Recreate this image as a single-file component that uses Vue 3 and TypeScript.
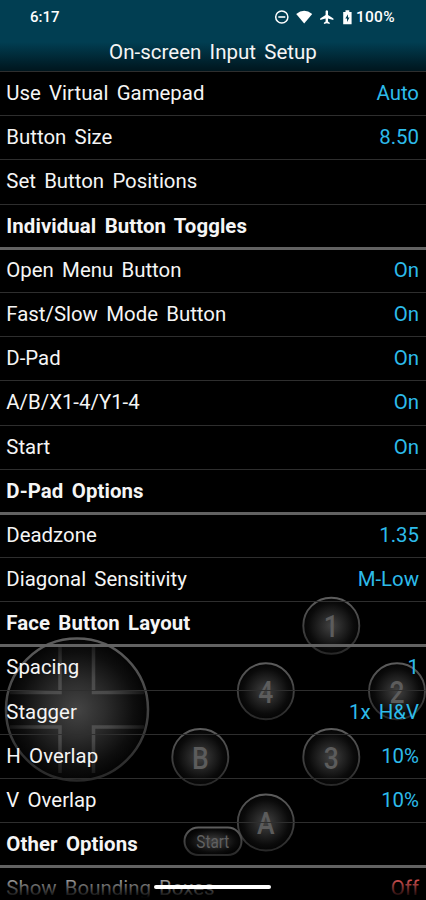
<script setup lang="ts">
interface Row {
  label: string
  value?: string
  kind?: 'heading' | 'off'
}

interface PadButton {
  label: string
  x: number
  y: number
}

const rows: Row[] = [
  { label: 'Use Virtual Gamepad', value: 'Auto' },
  { label: 'Button Size', value: '8.50' },
  { label: 'Set Button Positions' },
  { label: 'Individual Button Toggles', kind: 'heading' },
  { label: 'Open Menu Button', value: 'On' },
  { label: 'Fast/Slow Mode Button', value: 'On' },
  { label: 'D-Pad', value: 'On' },
  { label: 'A/B/X1-4/Y1-4', value: 'On' },
  { label: 'Start', value: 'On' },
  { label: 'D-Pad Options', kind: 'heading' },
  { label: 'Deadzone', value: '1.35' },
  { label: 'Diagonal Sensitivity', value: 'M-Low' },
  { label: 'Face Button Layout', kind: 'heading' },
  { label: 'Spacing', value: '1' },
  { label: 'Stagger', value: '1x H&V' },
  { label: 'H Overlap', value: '10%' },
  { label: 'V Overlap', value: '10%' },
  { label: 'Other Options', kind: 'heading' },
  { label: 'Show Bounding Boxes', value: 'Off', kind: 'off' },
]

const padButtons: PadButton[] = [
  { label: '1', x: 331.3, y: 625.7 },
  { label: '4', x: 265.8, y: 691.3 },
  { label: '2', x: 397, y: 691.3 },
  { label: 'B', x: 200.3, y: 757 },
  { label: '3', x: 331.3, y: 757 },
  { label: 'A', x: 265.8, y: 822.5 },
]
</script>

<template>
  <main class="screen">
    <header class="top">
      <div class="status">
        <span class="clock">6:17</span>
        <svg class="icons" width="80" height="18" viewBox="0 0 80 18">
          <circle cx="9.8" cy="9" r="6.1" fill="none" stroke="#fff" stroke-width="1.5" />
          <path d="M6.3 9h7" stroke="#fff" stroke-width="1.6" />
          <path d="M24.2 6Q32.2-.4 40.2 6L32.2 15.4Z" fill="#fff" />
          <path d="M53.6 3q1.2-1.4 2.4 0v4.1l5.4 3.4v1.6l-5.4-1.6v3l1.7 1.3v1.3l-2.9-.9-2.9.9v-1.3l1.7-1.3v-3l-5.4 1.6v-1.6l5.4-3.4z" fill="#fff" />
          <path d="M71.2 4h2.3V2.2h3.8V4h2.3v12.2h-8.4z" fill="#fff" />
          <path d="M76 6.2l-2.7 4.3h1.7v3.6l2.5-4.700h-1.500z" fill="#023e52" />
        </svg>
        <span class="battery">100%</span>
      </div>
      <h1 class="title">On-screen Input Setup</h1>
    </header>

    <svg class="gamepad" width="426" height="900" viewBox="0 0 426 900">
      <defs>
        <radialGradient id="dpad-fill">
          <stop offset="0" stop-color="#444" />
          <stop offset=".4" stop-color="#2c2c2c" />
          <stop offset=".8" stop-color="#0e0e0e" />
          <stop offset="1" stop-color="#040404" />
        </radialGradient>
        <radialGradient id="button-fill">
          <stop offset="0" stop-color="#424242" />
          <stop offset=".4" stop-color="#262626" />
          <stop offset=".8" stop-color="#0b0b0b" />
          <stop offset="1" stop-color="#040404" />
        </radialGradient>
        <linearGradient id="rim" x1="0" y1="0" x2="0" y2="1">
          <stop offset="0" stop-color="#5c5c5c" />
          <stop offset="1" stop-color="#282828" />
        </linearGradient>
        <radialGradient id="cross" gradientUnits="userSpaceOnUse" cx="77" cy="709.5" r="71">
          <stop offset="0" stop-color="#5c5c5c" />
          <stop offset=".5" stop-color="#484848" />
          <stop offset="1" stop-color="#121212" />
        </radialGradient>
      </defs>

      <circle cx="77" cy="709.5" r="71" fill="url(#dpad-fill)" stroke="url(#rim)" stroke-width="2.5" />
      <g fill="none" stroke="url(#cross)" stroke-width="3.500">
        <path d="M60 646v46.500H10" />
        <path d="M93.500 646v46.500H144" />
        <path d="M60 773v-46H10" />
        <path d="M93.500 773v-46H144" />
      </g>

      <g v-for="button in padButtons" :key="button.label" :transform="`translate(${button.x} ${button.y})`">
        <circle r="28" fill="url(#button-fill)" stroke="url(#rim)" stroke-width="1.9" />
        <text class="face" y="11.500" transform="scale(.84 1)">{{ button.label }}</text>
      </g>

      <rect x="184.500" y="827.500" width="57" height="27.500" rx="13.700" fill="url(#button-fill)" stroke="url(#rim)" stroke-width="2" />
      <text class="start" x="212.800" y="847.500" textLength="33" lengthAdjust="spacingAndGlyphs">Start</text>
    </svg>

    <ul class="list">
      <li v-for="row in rows" :key="row.label" class="row" :class="row.kind">
        <span>{{ row.label }}</span>
        <span v-if="row.value" class="value">{{ row.value }}</span>
      </li>
    </ul>
    <div class="fade"></div>
    <div class="home"></div>
  </main>
</template>

<style>
body {
  background: #000;
}
</style>

<style scoped>
.screen {
  position: relative;
  width: 426px;
  height: 900px;
  overflow: hidden;
  background: #000;
  color: #f5f5f5;
  font-family: Roboto, sans-serif;
}

.top {
  box-sizing: border-box;
  height: 71px;
  background: linear-gradient(#013e52 0, #013e52 42px, #001c26 66px, #00161e 71px);
}

.status {
  display: flex;
  align-items: center;
  height: 34px;
  padding-left: 30px;
  font-weight: 500;
  font-size: 15.5px;
}

.clock {
  width: 242px;
  color: #fff;
  font-size: 15px;
}

.icons {
  flex: none;
}

.battery {
  margin-left: 4px;
  color: #fff;
  letter-spacing: .25px;
}

.title {
  margin: 0;
  font-size: 20.5px;
  font-weight: 400;
  line-height: 36px;
  text-align: center;
  word-spacing: 3.2px;
}

.list {
  position: relative;
  margin: 0;
  padding: 0;
  list-style: none;
}

.row {
  box-sizing: border-box;
  display: flex;
  justify-content: space-between;
  height: 44.2px;
  padding: 0 7px 0 6.3px;
  border-top: 1.5px solid #2e2e2e;
  font-size: 20.4px;
  line-height: 43.3px;
  word-spacing: 3.2px;
  white-space: nowrap;
}

.heading {
  font-weight: 700;
  letter-spacing: .08px;
}

.heading + .row {
  height: 45.2px;
  margin-top: -1px;
  border-top: 3px solid #626262;
  line-height: 41.3px;
}

.value {
  color: #2dbbea;
}

.off {
  color: #9a9a9a;
}

.off .value {
  color: #d05050;
}

.gamepad {
  position: absolute;
  top: 0;
  left: 0;
}

.face {
  fill: #5c5c5c;
  font-size: 31.5px;
  font-weight: 500;
  text-anchor: middle;
}

.start {
  fill: #606060;
  font-size: 17.5px;
  text-anchor: middle;
}

.fade {
  position: absolute;
  left: 0;
  bottom: 0;
  width: 100%;
  height: 20px;
  background: linear-gradient(transparent, #000 90%);
}

.home {
  position: absolute;
  left: 154px;
  top: 885px;
  width: 117px;
  height: 4px;
  border-radius: 2px;
  background: #fff;
}
</style>
